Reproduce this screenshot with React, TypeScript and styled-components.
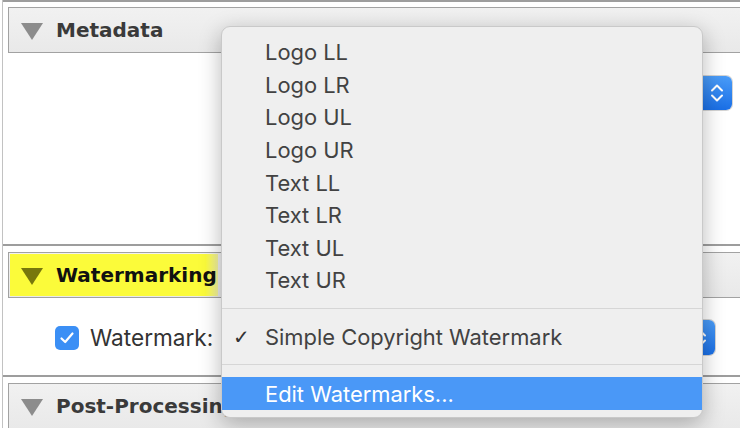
import React from 'react';
import styled, { createGlobalStyle } from 'styled-components';

const GlobalStyle = createGlobalStyle`
  html, body {
    margin: 0;
    padding: 0;
    background: #ffffff;
    overflow: hidden;
  }
`;

const Panel = styled.div`
  position: relative;
  width: 740px;
  height: 428px;
  overflow: hidden;
  background: #ffffff;
`;

const Frame = styled.div`
  margin-left: 2px;
  height: 100%;
  border-left: 1px solid #c2c2c2;
  display: flex;
  flex-direction: column;
`;

const Section = styled.div<{ $gap?: number }>`
  border-top: 2px solid #9d9d9d;
  padding-top: ${(p) => p.$gap ?? 5}px;
  padding-left: 5px;
`;

const Header = styled.div`
  box-sizing: border-box;
  height: 46px;
  margin-right: -20px;
  border: 1px solid #a2a2a2;
  background: linear-gradient(#f1f1f1, #e9e9e9);
  display: flex;
  align-items: stretch;
  padding: 1px 0 1px 1px;
`;

const TitleBlock = styled.div<{ $marked?: boolean }>`
  display: flex;
  align-items: center;
  gap: 13px;
  padding-left: 11px;
  width: ${(p) => (p.$marked ? '197px' : 'auto')};
  background: ${(p) =>
    p.$marked ? 'linear-gradient(90deg, #fbfb3a 0%, #fbfb3a 94%, #f4f4a0 100%)' : 'transparent'};
`;

const Triangle = styled.span<{ $color: string }>`
  width: 0;
  height: 0;
  border-left: 11px solid transparent;
  border-right: 11px solid transparent;
  border-top: 17px solid ${(p) => p.$color};
  margin-top: 2px;
`;

const Title = styled.span<{ $dark?: boolean }>`
  font-family: 'DejaVu Sans', 'Liberation Sans', sans-serif;
  font-weight: bold;
  font-size: 20px;
  color: ${(p) => (p.$dark ? '#111111' : '#3a3a3a')};
  white-space: nowrap;
`;

const Body = styled.div<{ $height: number; $top: number }>`
  height: ${(p) => p.$height}px;
  padding-top: ${(p) => p.$top}px;
  box-sizing: border-box;
`;

const Row = styled.div<{ $right: number }>`
  display: flex;
  align-items: center;
  padding-left: 47px;
  padding-right: ${(p) => p.$right}px;
`;

const Checkbox = styled.span`
  width: 24px;
  height: 24px;
  border-radius: 5px;
  background: #3b8ff5;
  display: flex;
  align-items: center;
  justify-content: center;
  flex-shrink: 0;
`;

const Label = styled.span`
  margin-left: 11px;
  font-family: Inter, 'Noto Sans', sans-serif;
  font-size: 22.6px;
  color: #333333;
`;

const Popup = styled.div<{ $height: number }>`
  margin-left: auto;
  width: 300px;
  height: ${(p) => p.$height}px;
  border-radius: 6px;
  background: #ffffff;
  box-shadow: 0 0 0 1px #d4d4d4;
  display: flex;
  justify-content: flex-end;
  overflow: hidden;
`;

const PopupArrows = styled.div`
  width: 30px;
  height: 100%;
  background: linear-gradient(#4a9cf8, #1a6fe6);
  display: flex;
  align-items: center;
  justify-content: center;
`;

const Menu = styled.div`
  position: absolute;
  left: 221px;
  top: 26px;
  width: 482px;
  box-sizing: border-box;
  padding: 9px 0 7px;
  border-radius: 9px;
  background: #efefef;
  border: 1px solid #c9c9c9;
  box-shadow: 0 6px 22px rgba(0, 0, 0, 0.28);
  font-family: Inter, 'Noto Sans', sans-serif;
`;

const Item = styled.div<{ $active?: boolean }>`
  position: relative;
  height: 32.6px;
  display: flex;
  align-items: center;
  padding-left: 43px;
  font-size: 21.9px;
  color: ${(p) => (p.$active ? '#ffffff' : '#424242')};
  background: ${(p) => (p.$active ? '#4a98f7' : 'transparent')};
  white-space: nowrap;
`;

const Check = styled.span`
  position: absolute;
  left: 11px;
  font-family: 'DejaVu Sans', sans-serif;
  font-size: 20px;
  color: #333333;
`;

const Separator = styled.div`
  height: 1px;
  margin: 11px 0 12px;
  background: #d6d6d6;
`;

const Arrows = () => (
  <svg width="16" height="22" viewBox="0 0 16 22" fill="none">
    <path d="M3 8.5 L8 3.5 L13 8.5" stroke="#fff" strokeWidth="2" strokeLinecap="round" strokeLinejoin="round" />
    <path d="M3 13.5 L8 18.5 L13 13.5" stroke="#fff" strokeWidth="2" strokeLinecap="round" strokeLinejoin="round" />
  </svg>
);

const positions = ['Logo LL', 'Logo LR', 'Logo UL', 'Logo UR', 'Text LL', 'Text LR', 'Text UL', 'Text UR'];

const App: React.FC = () => {
  return (
    <Panel>
      <GlobalStyle />
      <Frame>
        <Section $gap={5}>
          <Header>
            <TitleBlock>
              <Triangle $color="#8c8c8c" />
              <Title>Metadata</Title>
            </TitleBlock>
          </Header>
          <Body $height={191} $top={23}>
            <Row $right={8}>
              <Popup $height={34}>
                <PopupArrows>
                  <Arrows />
                </PopupArrows>
              </Popup>
            </Row>
          </Body>
        </Section>
        <Section $gap={6}>
          <Header>
            <TitleBlock $marked>
              <Triangle $color="#77770c" />
              <Title $dark>Watermarking</Title>
            </TitleBlock>
          </Header>
          <Body $height={77} $top={22}>
            <Row $right={25}>
              <Checkbox>
                <svg width="16" height="14" viewBox="0 0 16 14" fill="none">
                  <path d="M2.5 7.5 L6.2 11 L13.5 2.5" stroke="#fff" strokeWidth="2.2" strokeLinecap="round" strokeLinejoin="round" />
                </svg>
              </Checkbox>
              <Label>Watermark:</Label>
              <Popup $height={35}>
                <PopupArrows>
                  <Arrows />
                </PopupArrows>
              </Popup>
            </Row>
          </Body>
        </Section>
        <Section $gap={6}>
          <Header>
            <TitleBlock>
              <Triangle $color="#8c8c8c" />
              <Title>Post-Processing</Title>
            </TitleBlock>
          </Header>
        </Section>
      </Frame>
      <Menu>
        {positions.map((name) => (
          <Item key={name}>{name}</Item>
        ))}
        <Separator />
        <Item>
          <Check>✓</Check>
          Simple Copyright Watermark
        </Item>
        <Separator />
        <Item $active>Edit Watermarks...</Item>
      </Menu>
    </Panel>
  );
};

export default App;
